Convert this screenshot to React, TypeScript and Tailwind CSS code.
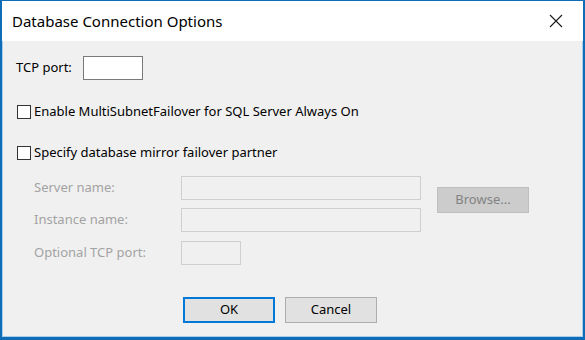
import React from "react";

const FONT = { fontFamily: '"Noto Sans", "Open Sans", sans-serif' };

function DisabledRow({ label, inputWidth }: { label: string; inputWidth: string }) {
  return (
    <div className="flex items-center h-[24px]">
      <span className="w-[147px] text-[13px] text-[#a3a3a3]">{label}</span>
      <div className={`${inputWidth} h-[24px] border border-[#cfcfcf] bg-[#f0f0f0]`} />
    </div>
  );
}

function Checkbox({ label }: { label: string }) {
  return (
    <div className="flex items-center h-[16px]">
      <span className="w-[14px] h-[14px] border border-[#333333] bg-white ml-[1px]" />
      <span className="ml-[3px] text-[13px] text-black">{label}</span>
    </div>
  );
}

export default function App() {
  return (
    <div
      className="w-[585px] h-[340px] flex flex-col bg-[#0e6db6] pt-[1px] pl-[2px] pr-[2px] pb-[3px]"
      style={FONT}
    >
      {/* Title bar */}
      <div className="h-[40px] bg-white flex items-center justify-between pl-[10px] pr-[20px]">
        <span className="text-[15px] text-black">Database Connection Options</span>
        <svg width="14" height="14" viewBox="0 0 14 14">
          <path d="M1 1 L13 13 M13 1 L1 13" stroke="#1a1a1a" strokeWidth="1.1" />
        </svg>
      </div>

      {/* Body */}
      <div className="flex-1 bg-[#f0f0f0] border-l border-r border-b border-[#a8cdec] pl-[13px] pt-[15px] flex flex-col">
        <div className="flex items-center h-[24px]">
          <span className="text-[13px] text-black">TCP port:</span>
          <div className="ml-[11px] w-[60px] h-[24px] border border-[#7a7a7a] bg-white" />
        </div>

        <div className="mt-[24px]">
          <Checkbox label="Enable MultiSubnetFailover for SQL Server Always On" />
        </div>
        <div className="mt-[25px]">
          <Checkbox label="Specify database mirror failover partner" />
        </div>

        <div className="flex mt-[15px] pl-[18px]">
          <div className="flex flex-col gap-[8px]">
            <DisabledRow label="Server name:" inputWidth="w-[240px]" />
            <DisabledRow label="Instance name:" inputWidth="w-[240px]" />
            <div className="mt-[1px]">
              <DisabledRow label="Optional TCP port:" inputWidth="w-[60px]" />
            </div>
          </div>
          <div className="ml-[16px] mt-[11px]">
            <div className="w-[92px] h-[26px] bg-[#cccccc] border border-[#bfbfbf] flex items-center justify-center text-[13px] text-[#838383]">
              Browse...
            </div>
          </div>
        </div>

        <div className="flex mt-[32px] pl-[167px] gap-[10px]">
          <div className="w-[92px] h-[26px] bg-[#e1e1e1] border-2 border-[#0078d7] flex items-center justify-center text-[13px] text-black">
            OK
          </div>
          <div className="w-[92px] h-[26px] bg-[#e1e1e1] border border-[#adadad] flex items-center justify-center text-[13px] text-black">
            Cancel
          </div>
        </div>
      </div>
    </div>
  );
}
